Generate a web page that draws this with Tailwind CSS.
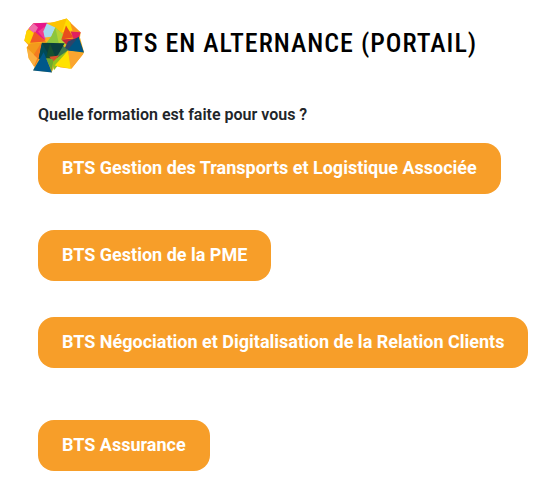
<!DOCTYPE html>
<html lang="fr">
<head>
    <meta charset="UTF-8">
    <meta name="viewport" content="width=device-width, initial-scale=1.0">
    <title>BTS en alternance (portail)</title>
    <script src="https://cdn.jsdelivr.net/npm/@tailwindcss/browser@4"></script>
</head>
<body class="bg-white font-['Roboto',sans-serif] text-[#212529]">
    <!-- Header -->
    <header class="flex items-center gap-[30px] pt-[18px] pl-6">
        <svg class="h-[55px] w-[60px] shrink-0" viewBox="30 26 180 164" aria-hidden="true">
            <path fill="#fbb21b" d="M58 41 100 40 122 38 158 27 170 40 178 60 200 68 198 84 210 128 204 138 172 178 140 174 122 168 113 188 58 182 62 172 44 146 38 115 44 108 31 94 38 64Z"/>
            <path fill="#ffd400" d="M38 64 60 60 50 106 31 94Z"/>
            <path fill="#fdc300" d="M104 42 158 27 144 68 122 54Z"/>
            <path fill="#ffde00" d="M158 27 170 40 178 62 144 68Z"/>
            <path fill="#f7941e" d="M168 38 200 68 176 66Z"/>
            <path fill="#e6178a" d="M58 41 100 40 92 92 44 58Z"/>
            <path fill="#f06eaa" d="M58 41 44 58 62 72 72 54Z"/>
            <path fill="#f0408f" d="M92 52 94 92 72 66Z"/>
            <path fill="#f15a24" d="M62 66 96 96 48 100Z"/>
            <path fill="#a5dcee" d="M98 42 124 54 112 82 92 84 88 66Z"/>
            <path fill="#8cc63f" d="M124 54 146 74 150 102 96 102 112 80Z"/>
            <path fill="#b5d334" d="M124 54 148 76 160 112 134 100Z"/>
            <path fill="#e84e1b" d="M156 48 178 84 142 90Z"/>
            <path fill="#e0215f" d="M170 66 200 68 194 86 178 88Z"/>
            <path fill="#c4273a" d="M142 90 194 86 164 112Z"/>
            <path fill="#2e4468" d="M162 96 196 82 176 124 150 120Z"/>
            <path fill="#005582" d="M194 82 210 129 160 123Z"/>
            <path fill="#f39a1c" d="M46 102 84 100 72 146 38 115Z"/>
            <path fill="#f47b20" d="M82 100 86 124 62 172 50 150Z"/>
            <path fill="#fbb040" d="M40 116 70 146 60 172 44 146Z"/>
            <path fill="#93c120" d="M112 148 162 120 138 160 120 182Z"/>
            <path fill="#3e7a4c" d="M140 102 162 122 128 146Z"/>
            <path fill="#0b3f3d" d="M84 100 152 101 126 146 74 148Z"/>
            <path fill="#004b57" d="M84 100 108 144 74 148Z"/>
            <path fill="#17502f" d="M108 102 126 146 96 146Z"/>
            <path fill="#d9512c" d="M106 142 136 138 118 156Z"/>
            <path fill="#6cab2d" d="M96 146 118 150 114 186Z"/>
            <path fill="#00588a" d="M89 128 114 189 57 183Z"/>
            <path fill="#ffe200" d="M162 124 170 178 122 168Z"/>
            <path fill="#faa530" d="M162 124 209 132 172 178Z"/>
        </svg>
        <h1 class="mt-[-6px] font-['Roboto_Condensed','Roboto',sans-serif] text-[26px] leading-8 font-medium tracking-[1px] whitespace-nowrap text-black">BTS EN ALTERNANCE (PORTAIL)</h1>
    </header>

    <!-- Formations -->
    <main class="px-[38px] pt-[30px] pb-4">
        <p class="text-base leading-6 font-semibold">Quelle formation est faite pour vous ?</p>
        <nav class="mt-4 flex flex-col items-start gap-9 text-lg leading-[27px] font-bold whitespace-nowrap text-white">
            <a href="#transports" class="rounded-2xl bg-[#f79e29] px-6 pt-[11px] pb-[13px]">BTS Gestion des Transports et Logistique Associée</a>
            <a href="#pme" class="rounded-2xl bg-[#f79e29] px-6 pt-[11px] pb-[13px]">BTS Gestion de la PME</a>
            <a href="#relation-clients" class="rounded-2xl bg-[#f79e29] px-6 pt-[11px] pb-[13px]">BTS Négociation et Digitalisation de la Relation Clients</a>
            <a href="#assurance" class="mt-4 rounded-2xl bg-[#f79e29] px-6 pt-[11px] pb-[13px]">BTS Assurance</a>
        </nav>
    </main>
</body>
</html>
